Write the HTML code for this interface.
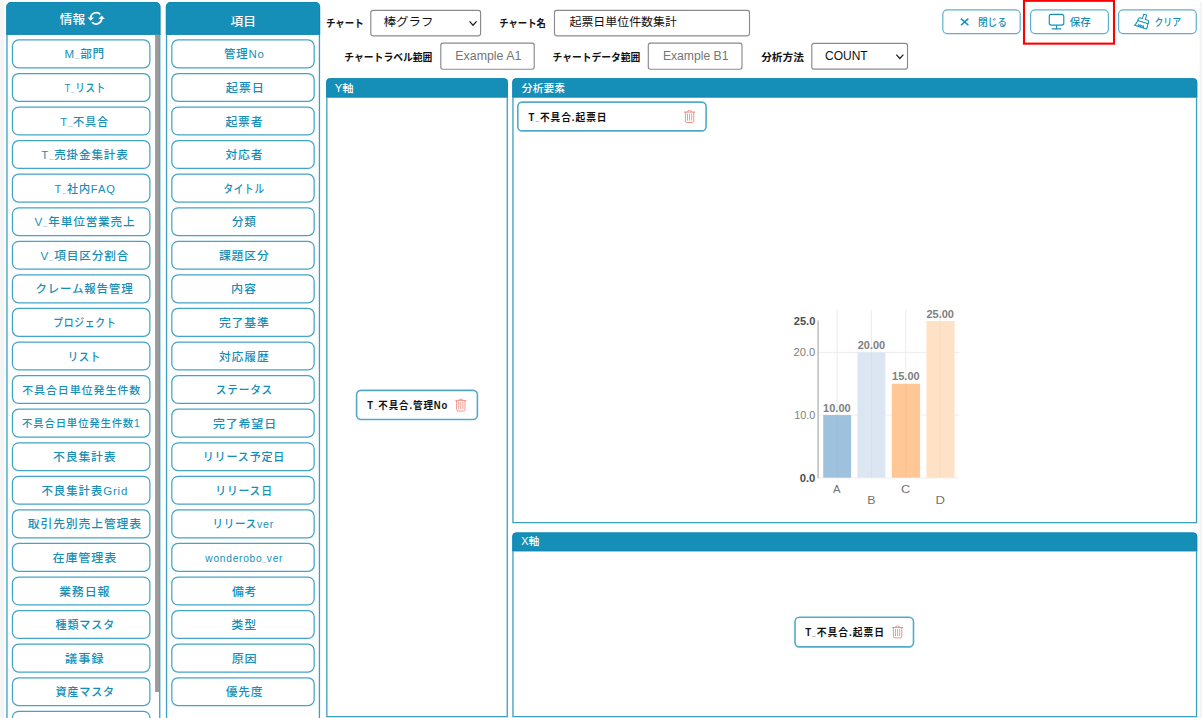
<!DOCTYPE html>
<html lang="ja"><head><meta charset="utf-8"><title>チャート設定</title>
<style>
html,body{margin:0;padding:0;background:#fff;}
body{width:1202px;height:718px;overflow:hidden;position:relative;font-family:"Liberation Sans","Noto Sans CJK JP",sans-serif;}
#shapes{position:absolute;left:0;top:0;}
.u{font-size:0.66em;font-weight:700;}
.t{position:absolute;left:0;top:0;white-space:nowrap;line-height:1;margin:0;padding:0;transform-origin:0 0;}
</style></head><body>
<svg id="shapes" width="1202" height="718" viewBox="0 0 1202 718">
<path d="M0,0.8 H3.3 Q4.0,1.0 4.0,3 V718 H0 Z" fill="#f5f5f5"/>
<path d="M4.0,3 Q4.9,3 4.8,5 V718 H4.0 Z" fill="#fafafa"/>
<path d="M1202,1.2 Q1199.7,2.2 1199.6,6 V718 H1202 Z" fill="#f4f4f4"/>
<path d="M1199.6,6 Q1198.9,6 1198.8,9 V718 H1199.6 Z" fill="#fafafa"/>
<path d="M6.3,34.8 V6.699999999999999 A4.6,4.6 0 0 1 10.899999999999999,2.1 H155.8 A4.6,4.6 0 0 1 160.4,6.699999999999999 V34.8 Z" fill="#168fb8"/>
<path d="M6.7,34.8 V6.699999999999999 A4.199999999999999,4.199999999999999 0 0 1 10.899999999999999,2.5 H155.8 A4.199999999999999,4.199999999999999 0 0 1 160.0,6.699999999999999 V34.8" fill="none" stroke="#0b87b2" stroke-width="0.8"/>
<path d="M6.3,34.4 H160.4" stroke="#0b87b2" stroke-width="0.8"/>
<path d="M6.95,34.8 V739.35 H159.75 V34.8" fill="none" stroke="#3a9fc3" stroke-width="1.3"/>
<path d="M165.9,34.8 V6.699999999999999 A4.6,4.6 0 0 1 170.5,2.1 H315.5 A4.6,4.6 0 0 1 320.1,6.699999999999999 V34.8 Z" fill="#168fb8"/>
<path d="M166.3,34.8 V6.699999999999999 A4.199999999999999,4.199999999999999 0 0 1 170.5,2.5 H315.5 A4.199999999999999,4.199999999999999 0 0 1 319.70000000000005,6.699999999999999 V34.8" fill="none" stroke="#0b87b2" stroke-width="0.8"/>
<path d="M165.9,34.4 H320.1" stroke="#0b87b2" stroke-width="0.8"/>
<path d="M166.55,34.8 V739.35 H319.45000000000005 V34.8" fill="none" stroke="#3a9fc3" stroke-width="1.3"/>
<rect x="155.1" y="34.8" width="4.0" height="657.3" fill="#9a9a9a"/>
<rect x="12.43" y="39.92" width="137.45" height="27.85" rx="6.2" ry="6.2" fill="#fff" stroke="#44a4c6" stroke-width="1.25"/>
<rect x="12.43" y="73.50" width="137.45" height="27.85" rx="6.2" ry="6.2" fill="#fff" stroke="#44a4c6" stroke-width="1.25"/>
<rect x="12.43" y="107.06" width="137.45" height="27.85" rx="6.2" ry="6.2" fill="#fff" stroke="#44a4c6" stroke-width="1.25"/>
<rect x="12.43" y="140.63" width="137.45" height="27.85" rx="6.2" ry="6.2" fill="#fff" stroke="#44a4c6" stroke-width="1.25"/>
<rect x="12.43" y="174.20" width="137.45" height="27.85" rx="6.2" ry="6.2" fill="#fff" stroke="#44a4c6" stroke-width="1.25"/>
<rect x="12.43" y="207.77" width="137.45" height="27.85" rx="6.2" ry="6.2" fill="#fff" stroke="#44a4c6" stroke-width="1.25"/>
<rect x="12.43" y="241.35" width="137.45" height="27.85" rx="6.2" ry="6.2" fill="#fff" stroke="#44a4c6" stroke-width="1.25"/>
<rect x="12.43" y="274.92" width="137.45" height="27.85" rx="6.2" ry="6.2" fill="#fff" stroke="#44a4c6" stroke-width="1.25"/>
<rect x="12.43" y="308.49" width="137.45" height="27.85" rx="6.2" ry="6.2" fill="#fff" stroke="#44a4c6" stroke-width="1.25"/>
<rect x="12.43" y="342.06" width="137.45" height="27.85" rx="6.2" ry="6.2" fill="#fff" stroke="#44a4c6" stroke-width="1.25"/>
<rect x="12.43" y="375.62" width="137.45" height="27.85" rx="6.2" ry="6.2" fill="#fff" stroke="#44a4c6" stroke-width="1.25"/>
<rect x="12.43" y="409.19" width="137.45" height="27.85" rx="6.2" ry="6.2" fill="#fff" stroke="#44a4c6" stroke-width="1.25"/>
<rect x="12.43" y="442.77" width="137.45" height="27.85" rx="6.2" ry="6.2" fill="#fff" stroke="#44a4c6" stroke-width="1.25"/>
<rect x="12.43" y="476.34" width="137.45" height="27.85" rx="6.2" ry="6.2" fill="#fff" stroke="#44a4c6" stroke-width="1.25"/>
<rect x="12.43" y="509.91" width="137.45" height="27.85" rx="6.2" ry="6.2" fill="#fff" stroke="#44a4c6" stroke-width="1.25"/>
<rect x="12.43" y="543.48" width="137.45" height="27.85" rx="6.2" ry="6.2" fill="#fff" stroke="#44a4c6" stroke-width="1.25"/>
<rect x="12.43" y="577.04" width="137.45" height="27.85" rx="6.2" ry="6.2" fill="#fff" stroke="#44a4c6" stroke-width="1.25"/>
<rect x="12.43" y="610.62" width="137.45" height="27.85" rx="6.2" ry="6.2" fill="#fff" stroke="#44a4c6" stroke-width="1.25"/>
<rect x="12.43" y="644.18" width="137.45" height="27.85" rx="6.2" ry="6.2" fill="#fff" stroke="#44a4c6" stroke-width="1.25"/>
<rect x="12.43" y="677.75" width="137.45" height="27.85" rx="6.2" ry="6.2" fill="#fff" stroke="#44a4c6" stroke-width="1.25"/>
<rect x="12.43" y="711.32" width="137.45" height="27.85" rx="6.2" ry="6.2" fill="#fff" stroke="#44a4c6" stroke-width="1.25"/>
<rect x="12.43" y="744.89" width="137.45" height="27.85" rx="6.2" ry="6.2" fill="#fff" stroke="#44a4c6" stroke-width="1.25"/>
<rect x="171.82" y="39.92" width="142.35" height="27.85" rx="6.2" ry="6.2" fill="#fff" stroke="#44a4c6" stroke-width="1.25"/>
<rect x="171.82" y="73.50" width="142.35" height="27.85" rx="6.2" ry="6.2" fill="#fff" stroke="#44a4c6" stroke-width="1.25"/>
<rect x="171.82" y="107.06" width="142.35" height="27.85" rx="6.2" ry="6.2" fill="#fff" stroke="#44a4c6" stroke-width="1.25"/>
<rect x="171.82" y="140.63" width="142.35" height="27.85" rx="6.2" ry="6.2" fill="#fff" stroke="#44a4c6" stroke-width="1.25"/>
<rect x="171.82" y="174.20" width="142.35" height="27.85" rx="6.2" ry="6.2" fill="#fff" stroke="#44a4c6" stroke-width="1.25"/>
<rect x="171.82" y="207.77" width="142.35" height="27.85" rx="6.2" ry="6.2" fill="#fff" stroke="#44a4c6" stroke-width="1.25"/>
<rect x="171.82" y="241.35" width="142.35" height="27.85" rx="6.2" ry="6.2" fill="#fff" stroke="#44a4c6" stroke-width="1.25"/>
<rect x="171.82" y="274.92" width="142.35" height="27.85" rx="6.2" ry="6.2" fill="#fff" stroke="#44a4c6" stroke-width="1.25"/>
<rect x="171.82" y="308.49" width="142.35" height="27.85" rx="6.2" ry="6.2" fill="#fff" stroke="#44a4c6" stroke-width="1.25"/>
<rect x="171.82" y="342.06" width="142.35" height="27.85" rx="6.2" ry="6.2" fill="#fff" stroke="#44a4c6" stroke-width="1.25"/>
<rect x="171.82" y="375.62" width="142.35" height="27.85" rx="6.2" ry="6.2" fill="#fff" stroke="#44a4c6" stroke-width="1.25"/>
<rect x="171.82" y="409.19" width="142.35" height="27.85" rx="6.2" ry="6.2" fill="#fff" stroke="#44a4c6" stroke-width="1.25"/>
<rect x="171.82" y="442.77" width="142.35" height="27.85" rx="6.2" ry="6.2" fill="#fff" stroke="#44a4c6" stroke-width="1.25"/>
<rect x="171.82" y="476.34" width="142.35" height="27.85" rx="6.2" ry="6.2" fill="#fff" stroke="#44a4c6" stroke-width="1.25"/>
<rect x="171.82" y="509.91" width="142.35" height="27.85" rx="6.2" ry="6.2" fill="#fff" stroke="#44a4c6" stroke-width="1.25"/>
<rect x="171.82" y="543.48" width="142.35" height="27.85" rx="6.2" ry="6.2" fill="#fff" stroke="#44a4c6" stroke-width="1.25"/>
<rect x="171.82" y="577.04" width="142.35" height="27.85" rx="6.2" ry="6.2" fill="#fff" stroke="#44a4c6" stroke-width="1.25"/>
<rect x="171.82" y="610.62" width="142.35" height="27.85" rx="6.2" ry="6.2" fill="#fff" stroke="#44a4c6" stroke-width="1.25"/>
<rect x="171.82" y="644.18" width="142.35" height="27.85" rx="6.2" ry="6.2" fill="#fff" stroke="#44a4c6" stroke-width="1.25"/>
<rect x="171.82" y="677.75" width="142.35" height="27.85" rx="6.2" ry="6.2" fill="#fff" stroke="#44a4c6" stroke-width="1.25"/>
<g id="refresh" fill="none" stroke="#fff" stroke-width="1.75" stroke-linecap="round"><path d="M99.7,13.9 A5.6,5.6 0 0 0 90.7,17.3"/><path d="M92.5,22.6 A5.6,5.6 0 0 0 101.7,19.2"/></g>
<path d="M87.5,17.4 H94.0 L90.7,20.7 Z M98.4,18.9 H104.9 L101.7,15.6 Z" fill="#fff"/>
<path d="M326.2,97.4 V82.2 A4.0,4.0 0 0 1 330.2,78.2 H503.9 A4.0,4.0 0 0 1 507.9,82.2 V97.4 Z" fill="#168fb8"/>
<path d="M326.59999999999997,97.4 V82.2 A3.6,3.6 0 0 1 330.2,78.60000000000001 H503.9 A3.6,3.6 0 0 1 507.5,82.2 V97.4" fill="none" stroke="#0b87b2" stroke-width="0.8"/>
<path d="M326.2,97.0 H507.9" stroke="#0b87b2" stroke-width="0.8"/>
<path d="M326.84999999999997,97.4 V716.65 H507.25 V97.4" fill="none" stroke="#3a9fc3" stroke-width="1.3"/>
<path d="M512.3,97.4 V82.2 A4.0,4.0 0 0 1 516.3,78.2 H1193.2 A4.0,4.0 0 0 1 1197.2,82.2 V97.4 Z" fill="#168fb8"/>
<path d="M512.6999999999999,97.4 V82.2 A3.6,3.6 0 0 1 516.3,78.60000000000001 H1193.2 A3.6,3.6 0 0 1 1196.8,82.2 V97.4" fill="none" stroke="#0b87b2" stroke-width="0.8"/>
<path d="M512.3,97.0 H1197.2" stroke="#0b87b2" stroke-width="0.8"/>
<path d="M512.9499999999999,97.4 V522.65 H1196.55 V97.4" fill="none" stroke="#3a9fc3" stroke-width="1.3"/>
<path d="M512.3,551.2 V536.5 A4.0,4.0 0 0 1 516.3,532.5 H1193.2 A4.0,4.0 0 0 1 1197.2,536.5 V551.2 Z" fill="#168fb8"/>
<path d="M512.6999999999999,551.2 V536.5 A3.6,3.6 0 0 1 516.3,532.9 H1193.2 A3.6,3.6 0 0 1 1196.8,536.5 V551.2" fill="none" stroke="#0b87b2" stroke-width="0.8"/>
<path d="M512.3,550.8000000000001 H1197.2" stroke="#0b87b2" stroke-width="0.8"/>
<path d="M512.9499999999999,551.2 V716.65 H1196.55 V551.2" fill="none" stroke="#3a9fc3" stroke-width="1.3"/>
<rect x="370.80" y="10.40" width="109.80" height="25.40" rx="2.2" ry="2.2" fill="#fff" stroke="#8a8a8a" stroke-width="1.15"/>
<path d="M469.55,21.35 L473.05,25.25 L476.55,21.35" fill="none" stroke="#222" stroke-width="1.25"/>
<rect x="554.50" y="10.40" width="195.00" height="25.40" rx="2.2" ry="2.2" fill="#fff" stroke="#8a8a8a" stroke-width="1.15"/>
<rect x="440.80" y="43.10" width="93.40" height="26.10" rx="2.2" ry="2.2" fill="#fff" stroke="#8a8a8a" stroke-width="1.15"/>
<rect x="648.30" y="43.10" width="93.70" height="26.10" rx="2.2" ry="2.2" fill="#fff" stroke="#8a8a8a" stroke-width="1.15"/>
<rect x="811.80" y="43.40" width="95.70" height="25.70" rx="2.2" ry="2.2" fill="#fff" stroke="#8a8a8a" stroke-width="1.15"/>
<path d="M896.35,54.55 L899.85,58.45 L903.35,54.55" fill="none" stroke="#222" stroke-width="1.25"/>
<rect x="942.80" y="9.80" width="77.40" height="23.80" rx="4.5" ry="4.5" fill="#fff" stroke="#5fb0cd" stroke-width="1.2"/>
<rect x="1030.60" y="9.80" width="77.80" height="23.80" rx="4.5" ry="4.5" fill="#fff" stroke="#5fb0cd" stroke-width="1.2"/>
<rect x="1118.60" y="9.80" width="77.70" height="23.80" rx="4.5" ry="4.5" fill="#fff" stroke="#5fb0cd" stroke-width="1.2"/>
<path d="M961.0,18.6 L968.4,25.3 M968.4,18.6 L961.0,25.3" stroke="#168fb8" stroke-width="1.5" fill="none"/>
<g fill="none" stroke="#168fb8" stroke-width="1.15"><rect x="1049.3" y="14.3" width="14.5" height="10.8" rx="2" ry="2"/><path d="M1056.6,25.2 V28.6 M1051.8,28.9 H1061.2"/></g>
<g id="broom" transform="translate(1143.0,21.9) rotate(17)" fill="none" stroke="#168fb8" stroke-width="1.05" stroke-linejoin="round" stroke-linecap="round"><path d="M-1.5,-7.6 h3.0 v4.6 h2.2 q1.7,0 1.7,1.7 v1.5 h-10.8 v-1.5 q0,-1.7 1.7,-1.7 h2.2 z"/><path d="M-5.3,0.4 q-0.5,3.2 -1.9,5.4 h12.6 q0.6,-2.6 -0.2,-5.4"/><path d="M-4.2,5.6 l1.0,-2.2 l0.6,2.2 l1.0,-2.2 l0.6,2.2 l1.0,-2.2 l0.6,2.2 l1.0,-2.2 l0.6,2.2" stroke-width="0.8"/></g>
<rect x="1024" y="0.8" width="90" height="42.85" fill="none" stroke="#ff0000" stroke-width="2.1"/>
<rect x="517.80" y="102.10" width="188.30" height="28.80" rx="4.4" ry="4.4" fill="#fff" stroke="#52aac9" stroke-width="1.6"/>
<g transform="translate(684.2,109.6)" fill="none" stroke="#e8766a" stroke-width="0.85" stroke-linecap="round" stroke-opacity="0.9"><path d="M0.2,2.5 H10.6"/><path d="M3.0,2.3 Q3.3,0.9 5.4,0.9 Q7.5,0.9 7.8,2.3"/><path d="M1.2,2.7 V11.2 Q1.2,12.9 2.9,12.9 H7.9 Q9.6,12.9 9.6,11.2 V2.7"/><path d="M3.3,4.2 V10.6 M5.4,4.2 V10.6 M7.5,4.2 V10.6" stroke-width="0.8"/></g>
<rect x="356.60" y="390.40" width="120.80" height="29.10" rx="4.4" ry="4.4" fill="#fff" stroke="#52aac9" stroke-width="1.6"/>
<g transform="translate(455.4,398.2)" fill="none" stroke="#e8766a" stroke-width="0.85" stroke-linecap="round" stroke-opacity="0.9"><path d="M0.2,2.5 H10.6"/><path d="M3.0,2.3 Q3.3,0.9 5.4,0.9 Q7.5,0.9 7.8,2.3"/><path d="M1.2,2.7 V11.2 Q1.2,12.9 2.9,12.9 H7.9 Q9.6,12.9 9.6,11.2 V2.7"/><path d="M3.3,4.2 V10.6 M5.4,4.2 V10.6 M7.5,4.2 V10.6" stroke-width="0.8"/></g>
<rect x="795.00" y="617.20" width="118.50" height="29.70" rx="4.4" ry="4.4" fill="#fff" stroke="#52aac9" stroke-width="1.6"/>
<g transform="translate(892.2,625.0)" fill="none" stroke="#e8766a" stroke-width="0.85" stroke-linecap="round" stroke-opacity="0.9"><path d="M0.2,2.5 H10.6"/><path d="M3.0,2.3 Q3.3,0.9 5.4,0.9 Q7.5,0.9 7.8,2.3"/><path d="M1.2,2.7 V11.2 Q1.2,12.9 2.9,12.9 H7.9 Q9.6,12.9 9.6,11.2 V2.7"/><path d="M3.3,4.2 V10.6 M5.4,4.2 V10.6 M7.5,4.2 V10.6" stroke-width="0.8"/></g>
<path d="M818.6,415.06 H959.1" stroke="#ececec" stroke-width="0.9"/>
<path d="M818.6,352.42 H959.1" stroke="#ececec" stroke-width="0.9"/>
<path d="M818.6,477.90 H959.1" stroke="#ececec" stroke-width="0.9"/>
<path d="M837.2,309.8 V477.7" stroke="#efefef" stroke-width="0.9"/>
<path d="M871.4,309.8 V477.7" stroke="#efefef" stroke-width="0.9"/>
<path d="M905.8,309.8 V477.7" stroke="#efefef" stroke-width="0.9"/>
<path d="M940.2,309.8 V477.7" stroke="#efefef" stroke-width="0.9"/>
<rect x="823.2" y="415.06" width="27.90" height="62.64" fill="#9bc0dd" fill-opacity="0.97"/>
<rect x="857.4" y="352.42" width="27.90" height="125.28" fill="#dbe5f3" fill-opacity="0.97"/>
<rect x="891.8" y="383.74" width="28.30" height="93.96" fill="#ffc592" fill-opacity="0.97"/>
<rect x="926.4" y="321.10" width="28.20" height="156.60" fill="#ffe0c4" fill-opacity="0.97"/>
<path d="M837.2,309.8 V477.7" stroke="#000" stroke-opacity="0.03" stroke-width="0.9"/>
<path d="M871.4,309.8 V477.7" stroke="#000" stroke-opacity="0.03" stroke-width="0.9"/>
<path d="M905.8,309.8 V477.7" stroke="#000" stroke-opacity="0.03" stroke-width="0.9"/>
<path d="M940.2,309.8 V477.7" stroke="#000" stroke-opacity="0.03" stroke-width="0.9"/>
<path d="M818.1,320.6 V478.2" stroke="#b3b3b3" stroke-width="1.3"/>
</svg>
<div class="t" id="a0" style="font-size:11.75px;font-weight:500;color:#168fb8;letter-spacing:0.85px;transform:translate(64.60px,48.42px) scaleX(0.9849);">M<span class="u">_</span>部門</div>
<div class="t" id="a1" style="font-size:11.75px;font-weight:500;color:#168fb8;letter-spacing:0.85px;transform:translate(64.54px,82.00px) scaleX(0.8143);">T<span class="u">_</span>リスト</div>
<div class="t" id="a2" style="font-size:11.75px;font-weight:500;color:#168fb8;letter-spacing:0.85px;transform:translate(60.37px,115.56px) scaleX(0.9548);">T<span class="u">_</span>不具合</div>
<div class="t" id="a3" style="font-size:11.75px;font-weight:500;color:#168fb8;letter-spacing:0.85px;transform:translate(41.25px,149.13px) scaleX(0.9830);">T<span class="u">_</span>売掛金集計表</div>
<div class="t" id="a4" style="font-size:11.75px;font-weight:500;color:#168fb8;letter-spacing:0.85px;transform:translate(54.41px,182.70px) scaleX(0.9495);">T<span class="u">_</span>社内FAQ</div>
<div class="t" id="a5" style="font-size:11.75px;font-weight:500;color:#168fb8;letter-spacing:0.85px;transform:translate(34.45px,216.27px) scaleX(0.9908);">V<span class="u">_</span>年単位営業売上</div>
<div class="t" id="a6" style="font-size:11.75px;font-weight:500;color:#168fb8;letter-spacing:0.85px;transform:translate(40.41px,249.85px) scaleX(0.9933);">V<span class="u">_</span>項目区分割合</div>
<div class="t" id="a7" style="font-size:11.75px;font-weight:500;color:#168fb8;letter-spacing:0.85px;transform:translate(35.43px,283.42px) scaleX(0.9760);">クレーム報告管理</div>
<div class="t" id="a8" style="font-size:11.75px;font-weight:500;color:#168fb8;letter-spacing:0.85px;transform:translate(53.14px,316.99px) scaleX(0.8378);">プロジェクト</div>
<div class="t" id="a9" style="font-size:11.75px;font-weight:500;color:#168fb8;letter-spacing:0.85px;transform:translate(67.67px,350.56px) scaleX(0.8865);">リスト</div>
<div class="t" id="a10" style="font-size:10.7px;font-weight:500;color:#168fb8;letter-spacing:0.85px;transform:translate(22.14px,384.65px) scaleX(1.0307);">不具合日単位発生件数</div>
<div class="t" id="a11" style="font-size:10.7px;font-weight:500;color:#168fb8;letter-spacing:0.85px;transform:translate(22.09px,418.22px) scaleX(0.9702);">不具合日単位発生件数1</div>
<div class="t" id="a12" style="font-size:11.75px;font-weight:500;color:#168fb8;letter-spacing:0.85px;transform:translate(53.04px,451.27px) scaleX(1.0069);">不良集計表</div>
<div class="t" id="a13" style="font-size:11.75px;font-weight:500;color:#168fb8;letter-spacing:0.85px;transform:translate(41.56px,484.84px) scaleX(0.9773);">不良集計表Grid</div>
<div class="t" id="a14" style="font-size:11.75px;font-weight:500;color:#168fb8;letter-spacing:0.85px;transform:translate(27.80px,518.40px) scaleX(1.0068);">取引先別売上管理表</div>
<div class="t" id="a15" style="font-size:11.75px;font-weight:500;color:#168fb8;letter-spacing:0.85px;transform:translate(52.49px,551.98px) scaleX(1.0256);">在庫管理表</div>
<div class="t" id="a16" style="font-size:11.75px;font-weight:500;color:#168fb8;letter-spacing:0.85px;transform:translate(58.99px,585.54px) scaleX(1.0220);">業務日報</div>
<div class="t" id="a17" style="font-size:11.75px;font-weight:500;color:#168fb8;letter-spacing:0.85px;transform:translate(55.62px,619.12px) scaleX(0.9426);">種類マスタ</div>
<div class="t" id="a18" style="font-size:11.75px;font-weight:500;color:#168fb8;letter-spacing:0.85px;transform:translate(65.09px,652.68px) scaleX(1.0424);">議事録</div>
<div class="t" id="a19" style="font-size:11.75px;font-weight:500;color:#168fb8;letter-spacing:0.85px;transform:translate(55.38px,686.25px) scaleX(0.9463);">資産マスタ</div>
<div class="t" id="b0" style="font-size:11.75px;font-weight:500;color:#168fb8;letter-spacing:0.85px;transform:translate(223.96px,48.42px) scaleX(0.9692);">管理No</div>
<div class="t" id="b1" style="font-size:11.75px;font-weight:500;color:#168fb8;letter-spacing:0.85px;transform:translate(225.63px,82.00px) scaleX(1.0343);">起票日</div>
<div class="t" id="b2" style="font-size:11.75px;font-weight:500;color:#168fb8;letter-spacing:0.85px;transform:translate(225.40px,115.56px) scaleX(1.0038);">起票者</div>
<div class="t" id="b3" style="font-size:11.75px;font-weight:500;color:#168fb8;letter-spacing:0.85px;transform:translate(225.40px,149.13px) scaleX(1.0042);">対応者</div>
<div class="t" id="b4" style="font-size:11.75px;font-weight:500;color:#168fb8;letter-spacing:0.85px;transform:translate(223.38px,182.70px) scaleX(0.8220);">タイトル</div>
<div class="t" id="b5" style="font-size:11.75px;font-weight:500;color:#168fb8;letter-spacing:0.85px;transform:translate(231.89px,216.27px) scaleX(0.9858);">分類</div>
<div class="t" id="b6" style="font-size:11.75px;font-weight:500;color:#168fb8;letter-spacing:0.85px;transform:translate(218.95px,249.85px) scaleX(1.0051);">課題区分</div>
<div class="t" id="b7" style="font-size:11.75px;font-weight:500;color:#168fb8;letter-spacing:0.85px;transform:translate(231.06px,283.42px) scaleX(1.0284);">内容</div>
<div class="t" id="b8" style="font-size:11.75px;font-weight:500;color:#168fb8;letter-spacing:0.85px;transform:translate(218.94px,316.99px) scaleX(1.0054);">完了基準</div>
<div class="t" id="b9" style="font-size:11.75px;font-weight:500;color:#168fb8;letter-spacing:0.85px;transform:translate(218.95px,350.56px) scaleX(1.0052);">対応履歴</div>
<div class="t" id="b10" style="font-size:11.75px;font-weight:500;color:#168fb8;letter-spacing:0.85px;transform:translate(215.68px,384.12px) scaleX(0.9114);">ステータス</div>
<div class="t" id="b11" style="font-size:11.75px;font-weight:500;color:#168fb8;letter-spacing:0.85px;transform:translate(212.94px,417.69px) scaleX(1.0167);">完了希望日</div>
<div class="t" id="b12" style="font-size:11.75px;font-weight:500;color:#168fb8;letter-spacing:0.85px;transform:translate(202.72px,451.27px) scaleX(0.9417);">リリース予定日</div>
<div class="t" id="b13" style="font-size:11.75px;font-weight:500;color:#168fb8;letter-spacing:0.85px;transform:translate(215.24px,484.84px) scaleX(0.9238);">リリース日</div>
<div class="t" id="b14" style="font-size:11.75px;font-weight:500;color:#168fb8;letter-spacing:0.85px;transform:translate(212.54px,518.40px) scaleX(0.8940);">リリースver</div>
<div class="t" id="b15" style="font-size:11.75px;font-weight:500;color:#168fb8;letter-spacing:0.85px;transform:translate(205.36px,551.98px) scaleX(0.8663);">wonderobo<span class="u">_</span>ver</div>
<div class="t" id="b16" style="font-size:11.75px;font-weight:500;color:#168fb8;letter-spacing:0.85px;transform:translate(231.90px,585.54px) scaleX(1.0076);">備考</div>
<div class="t" id="b17" style="font-size:11.75px;font-weight:500;color:#168fb8;letter-spacing:0.85px;transform:translate(231.37px,619.12px) scaleX(1.0184);">类型</div>
<div class="t" id="b18" style="font-size:11.75px;font-weight:500;color:#168fb8;letter-spacing:0.85px;transform:translate(231.65px,652.68px) scaleX(1.0283);">原因</div>
<div class="t" id="b19" style="font-size:11.75px;font-weight:500;color:#168fb8;letter-spacing:0.85px;transform:translate(225.65px,686.25px) scaleX(0.9967);">優先度</div>
<div class="t" id="h1" style="font-size:12.2px;font-weight:500;color:#fff;letter-spacing:0.00px;transform:translate(59.84px,13.50px) scaleX(1.0379);">情報</div>
<div class="t" id="h2" style="font-size:12.2px;font-weight:500;color:#fff;letter-spacing:0.00px;transform:translate(230.57px,15.55px) scaleX(1.0402);">項目</div>
<div class="t" id="ph1" style="font-size:10.4px;font-weight:500;color:#fff;letter-spacing:0.00px;transform:translate(334.85px,83.80px) scaleX(1.0844);">Y軸</div>
<div class="t" id="ph2" style="font-size:10.4px;font-weight:500;color:#fff;letter-spacing:0.00px;transform:translate(521.83px,83.80px) scaleX(1.0390);">分析要素</div>
<div class="t" id="ph3" style="font-size:10.4px;font-weight:500;color:#fff;letter-spacing:0.00px;transform:translate(521.28px,537.40px) scaleX(1.0412);">X軸</div>
<div class="t" id="l1" style="font-size:10.5px;font-weight:700;color:#111;letter-spacing:0.00px;transform:translate(325.94px,18.45px) scaleX(0.9007);">チャート</div>
<div class="t" id="l2" style="font-size:10.5px;font-weight:700;color:#111;letter-spacing:0.00px;transform:translate(499.34px,18.45px) scaleX(0.8867);">チャート名</div>
<div class="t" id="l3" style="font-size:10.5px;font-weight:700;color:#111;letter-spacing:0.00px;transform:translate(344.31px,51.85px) scaleX(0.9333);">チャートラベル範囲</div>
<div class="t" id="l4" style="font-size:10.5px;font-weight:700;color:#111;letter-spacing:0.00px;transform:translate(552.48px,51.85px) scaleX(0.9299);">チャートデータ範囲</div>
<div class="t" id="l5" style="font-size:10.5px;font-weight:700;color:#111;letter-spacing:0.00px;transform:translate(761.14px,51.85px) scaleX(1.0187);">分析方法</div>
<div class="t" id="s1" style="font-size:11.9px;font-weight:400;color:#111;letter-spacing:0.00px;transform:translate(383.48px,17.25px) scaleX(1.0528);">棒グラフ</div>
<div class="t" id="i1" style="font-size:11.9px;font-weight:400;color:#111;letter-spacing:0.00px;transform:translate(569.50px,17.45px) scaleX(1.0032);">起票日単位件数集計</div>
<div class="t" id="p1" style="font-size:12px;font-weight:400;color:#757575;letter-spacing:0.00px;transform:translate(455.35px,49.90px) scaleX(1.0296);">Example A1</div>
<div class="t" id="p2" style="font-size:12px;font-weight:400;color:#757575;letter-spacing:0.00px;transform:translate(662.89px,49.90px) scaleX(1.0142);">Example B1</div>
<div class="t" id="s2" style="font-size:12px;font-weight:400;color:#111;letter-spacing:0.00px;transform:translate(825.00px,49.90px) scaleX(1.0000);">COUNT</div>
<div class="t" id="tb1" style="font-size:10.4px;font-weight:500;color:#168fb8;letter-spacing:0.00px;transform:translate(977.91px,17.50px) scaleX(0.9312);">閉じる</div>
<div class="t" id="tb2" style="font-size:10.4px;font-weight:500;color:#168fb8;letter-spacing:0.00px;transform:translate(1069.69px,17.50px) scaleX(1.0057);">保存</div>
<div class="t" id="tb3" style="font-size:10.4px;font-weight:500;color:#168fb8;letter-spacing:0.00px;transform:translate(1154.46px,17.50px) scaleX(0.8518);">クリア</div>
<div class="t" id="c1" style="font-size:10.2px;font-weight:700;color:#111;letter-spacing:1.00px;transform:translate(528.50px,113.10px) scaleX(0.9523);">T<span class="u">_</span>不具合.起票日</div>
<div class="t" id="c2" style="font-size:10.2px;font-weight:700;color:#111;letter-spacing:1.00px;transform:translate(367.16px,401.20px) scaleX(0.9295);">T<span class="u">_</span>不具合.管理No</div>
<div class="t" id="c3" style="font-size:10.2px;font-weight:700;color:#111;letter-spacing:1.00px;transform:translate(805.16px,628.20px) scaleX(0.9614);">T<span class="u">_</span>不具合.起票日</div>
<div class="t" id="y25" style="font-size:10.7px;font-weight:700;color:#4d4d4d;letter-spacing:0.00px;transform:translate(793.83px,315.75px) scaleX(1.0322);">25.0</div>
<div class="t" id="y20" style="font-size:10.7px;font-weight:400;color:#808080;letter-spacing:0.00px;transform:translate(793.56px,347.05px) scaleX(1.0460);">20.0</div>
<div class="t" id="y10" style="font-size:10.7px;font-weight:400;color:#808080;letter-spacing:0.00px;transform:translate(794.18px,409.65px) scaleX(1.0154);">10.0</div>
<div class="t" id="y0" style="font-size:10.7px;font-weight:700;color:#4d4d4d;letter-spacing:0.00px;transform:translate(799.71px,472.85px) scaleX(1.0538);">0.0</div>
<div class="t" id="v10" style="font-size:10.7px;font-weight:700;color:#808080;letter-spacing:0.00px;transform:translate(823.11px,402.85px) scaleX(1.0314);">10.00</div>
<div class="t" id="v20" style="font-size:10.7px;font-weight:700;color:#808080;letter-spacing:0.00px;transform:translate(857.74px,339.95px) scaleX(1.0229);">20.00</div>
<div class="t" id="v15" style="font-size:10.7px;font-weight:700;color:#808080;letter-spacing:0.00px;transform:translate(892.11px,371.45px) scaleX(1.0277);">15.00</div>
<div class="t" id="v25" style="font-size:10.7px;font-weight:700;color:#808080;letter-spacing:0.00px;transform:translate(926.39px,308.55px) scaleX(1.0325);">25.00</div>
<div class="t" id="xa" style="font-size:10.8px;font-weight:400;color:#737373;letter-spacing:0.00px;transform:translate(833.08px,484.00px) scaleX(1.0460);">A</div>
<div class="t" id="xb" style="font-size:10.8px;font-weight:400;color:#737373;letter-spacing:0.00px;transform:translate(867.20px,495.10px) scaleX(1.1545);">B</div>
<div class="t" id="xc" style="font-size:10.8px;font-weight:400;color:#737373;letter-spacing:0.00px;transform:translate(900.94px,484.00px) scaleX(1.1820);">C</div>
<div class="t" id="xd" style="font-size:10.8px;font-weight:400;color:#737373;letter-spacing:0.00px;transform:translate(935.50px,495.10px) scaleX(1.2104);">D</div>
</body></html>
